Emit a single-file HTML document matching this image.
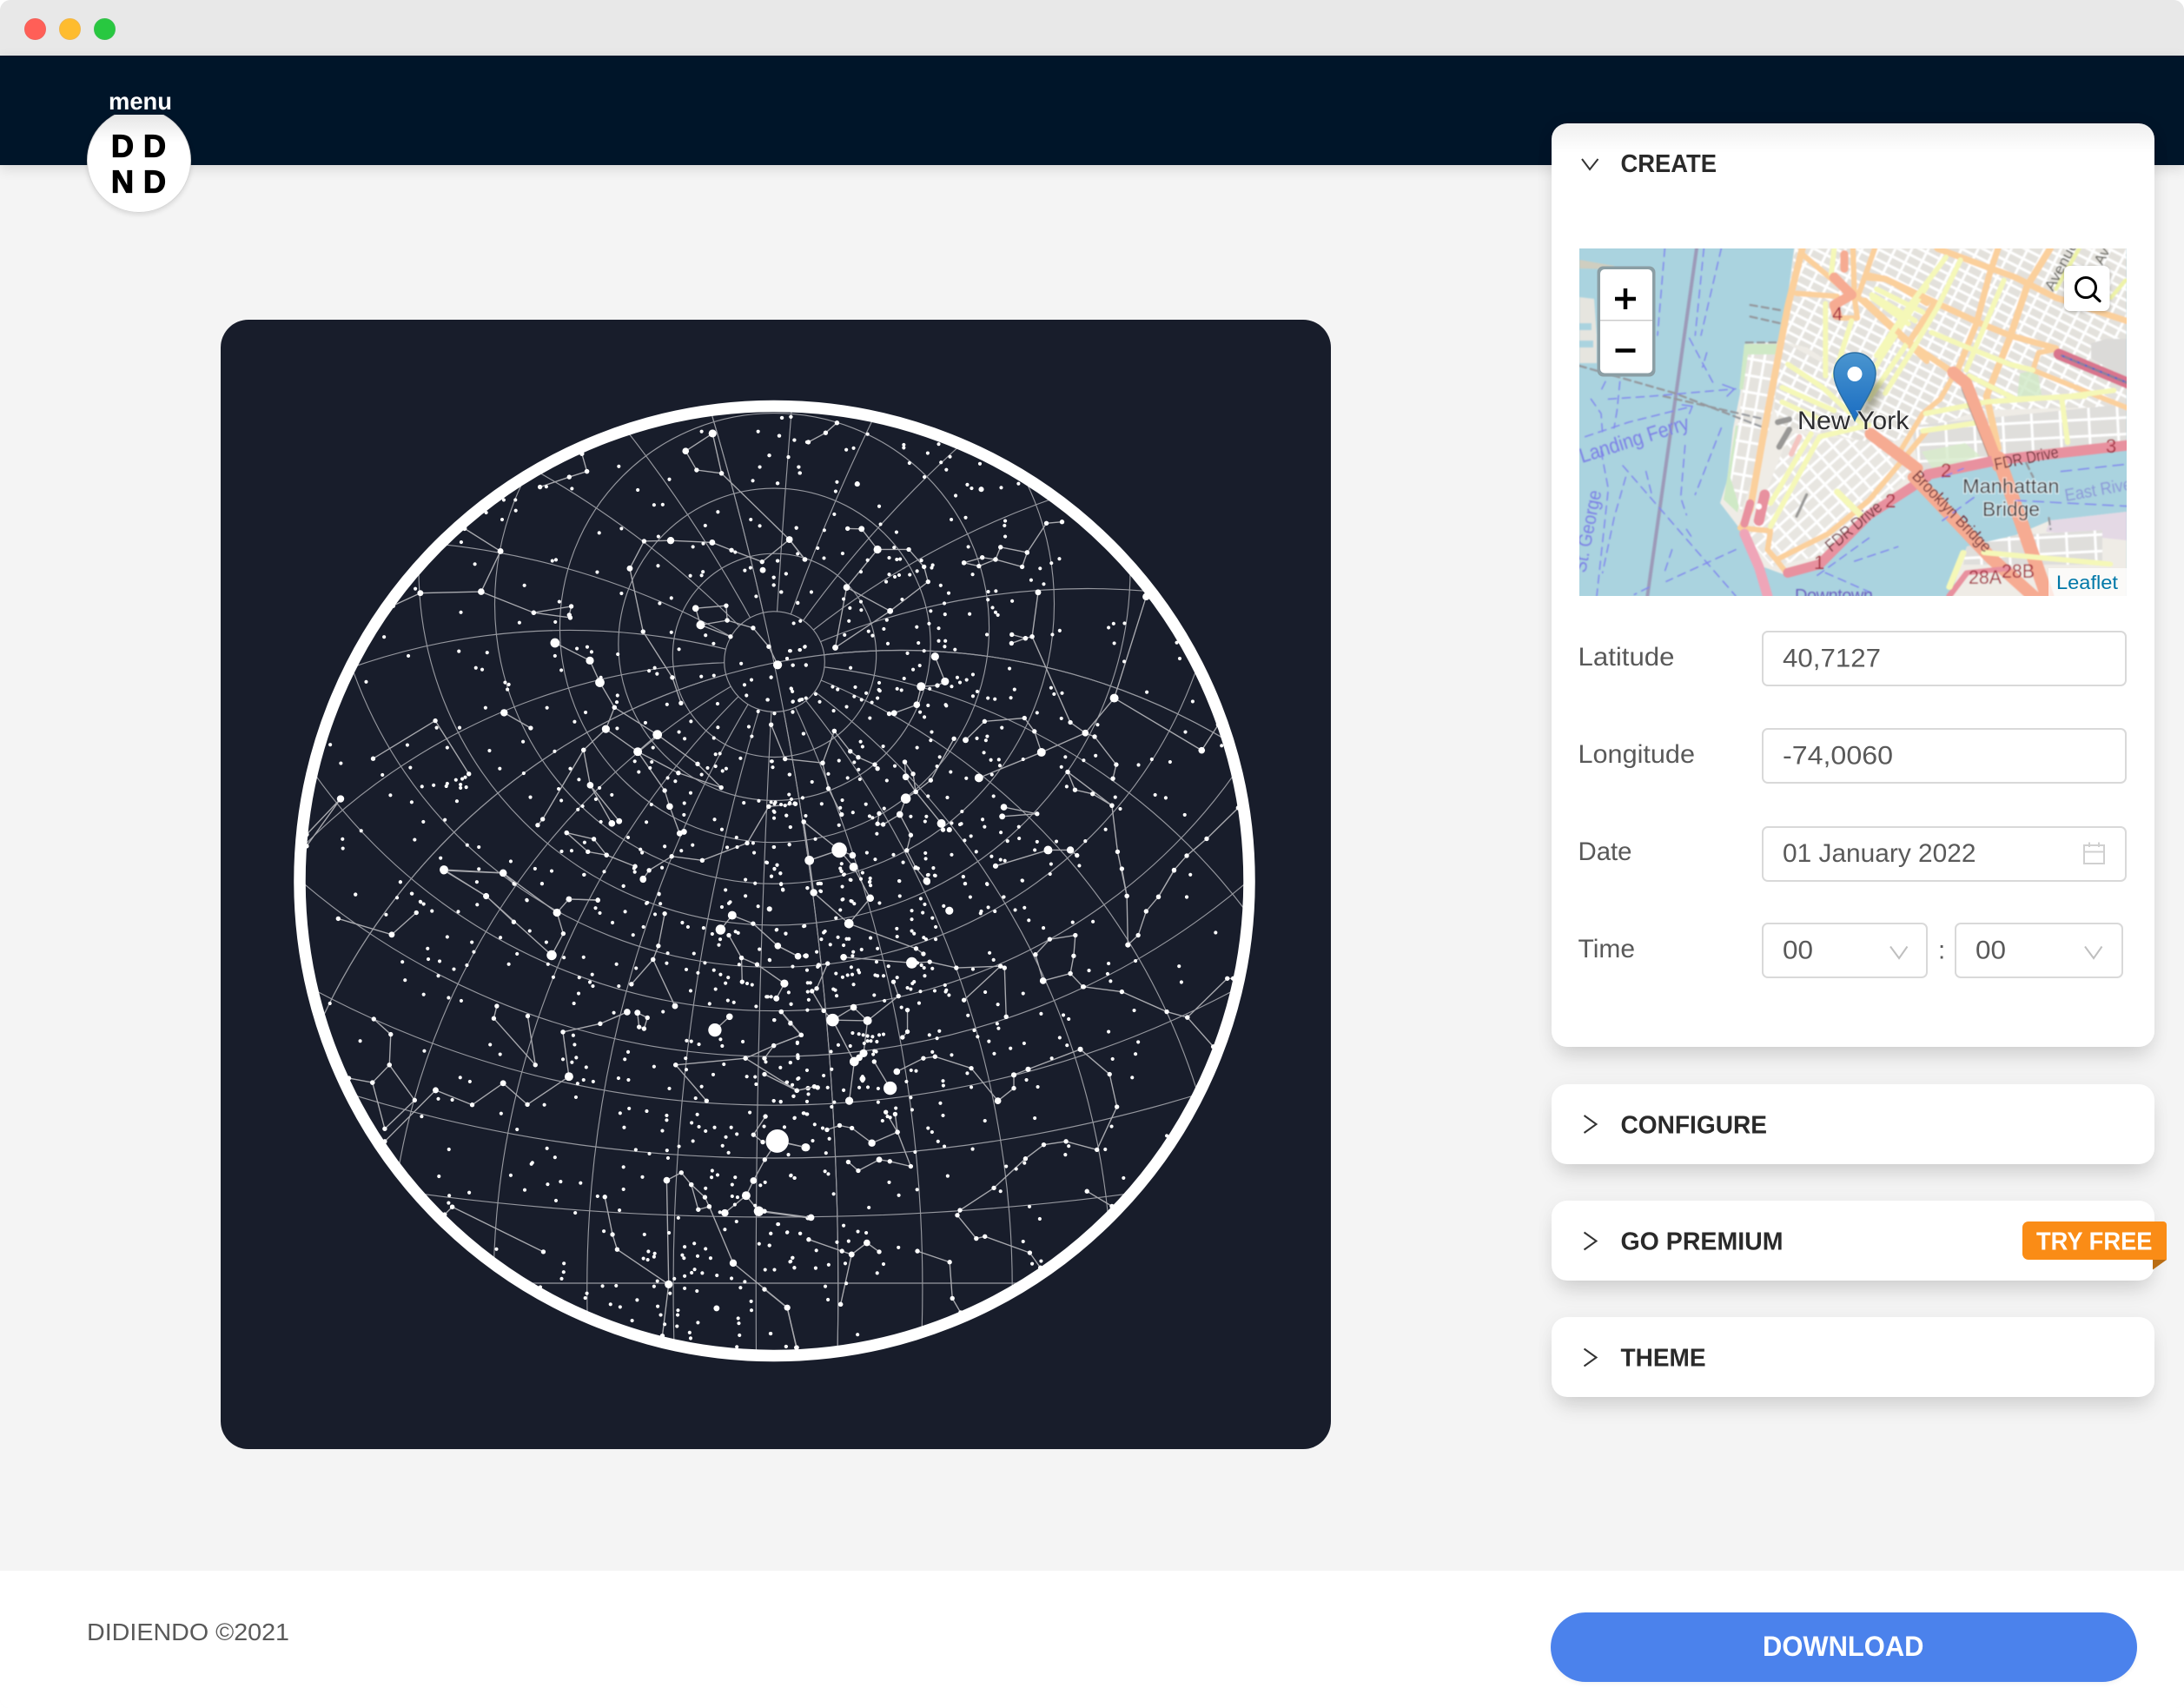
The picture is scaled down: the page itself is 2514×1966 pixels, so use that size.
<!DOCTYPE html>
<html lang="en"><head><meta charset="utf-8"><title>Star map</title>
<style>
*{box-sizing:border-box}
html,body{margin:0;padding:0;background:#fff;overflow:hidden;width:2514px;height:1966px}
body{position:relative;font-family:"Liberation Sans",sans-serif}
.a{position:absolute}
.card{position:absolute;left:1786px;width:694px;background:#fff;border-radius:18px;box-shadow:0 16px 24px -6px rgba(0,0,0,.13),0 2px 22px rgba(0,0,0,.05)}
.inp{position:absolute;background:#fff;border:2.5px solid #d9d9d9;border-radius:7px}
svg text{font-family:"Liberation Sans",sans-serif}
.r path{fill:none;stroke-linecap:round;stroke-linejoin:round}
</style></head><body>
<div class="a" style="left:0;top:0;width:2514px;height:1966px;background:#f4f4f4;border-radius:12px 12px 10px 10px;overflow:hidden">
 <div class="a" style="left:0;top:0;width:2514px;height:64px;background:#e8e8e8"></div>
 <div class="a" style="left:27.500px;top:21px;width:25px;height:25px;border-radius:50%;background:#ff5f57;border:1px solid #f0635c"></div>
 <div class="a" style="left:67.500px;top:21px;width:25px;height:25px;border-radius:50%;background:#febc2e;border:1px solid #f0b64a"></div>
 <div class="a" style="left:107.500px;top:21px;width:25px;height:25px;border-radius:50%;background:#28c840;border:1px solid #3abf50"></div>
 <div class="a" style="left:0;top:64px;width:2514px;height:126px;background:#001529;box-shadow:0 4px 14px rgba(0,0,0,.12)"></div>
 <div class="a" style="left:80px;top:132px;width:160px;height:130px;overflow:hidden"><div class="a" style="left:20px;top:-7px;width:119.500px;height:119.500px;border-radius:50%;border:1.500px solid #d6d6d6;background:linear-gradient(#e6e6e6 6%,#fff 32%);box-shadow:0 2px 6px rgba(0,0,0,.12)"></div></div>
 <div class="a" style="left:254px;top:368px;width:1278px;height:1300px;background:#181d2b;border-radius:32px"></div>
 <div class="card" style="top:142px;height:1063px;background:linear-gradient(#efefef 0,#fff 34px)"></div>
 <div class="card" style="top:1248px;height:92px"></div>
 <div class="card" style="top:1382px;height:92px"></div>
 <div class="card" style="top:1516px;height:92px"></div>
 <div class="inp" style="left:2028px;top:726px;width:420px;height:64px"></div>
 <div class="inp" style="left:2028px;top:838px;width:420px;height:64px"></div>
 <div class="inp" style="left:2028px;top:950.500px;width:420px;height:64px"></div>
 <div class="inp" style="left:2028px;top:1062px;width:191px;height:64px"></div>
 <div class="inp" style="left:2250px;top:1062px;width:193.500px;height:64px"></div>
 <div class="a" style="left:2328px;top:1406px;width:166px;height:44px;background:#fa8c16;border-radius:7px 4px 0 7px"></div>
 <div class="a" style="left:0;top:1807.500px;width:2514px;height:158.500px;background:#fff"></div>
 <div class="a" style="left:1785px;top:1856px;width:675px;height:80px;background:#4b82ec;border-radius:40px;box-shadow:0 3px 4px rgba(0,0,0,.04)"></div>
</div>
<svg class="a" style="left:0;top:0;overflow:hidden" width="2514" height="1966" viewBox="0 0 2514 1966" xmlns="http://www.w3.org/2000/svg">
<defs>
<clipPath id="sky"><circle cx="891.5" cy="1014" r="541"/></clipPath>
<clipPath id="mc"><rect x="1818" y="286" width="630" height="400"/></clipPath>
<marker id="v" viewBox="-9 -9 18 18" markerWidth="18" markerHeight="18" markerUnits="userSpaceOnUse"><circle r="7" fill="#fff"/></marker>
<marker id="s" viewBox="-7 -7 14 14" markerWidth="14" markerHeight="14" markerUnits="userSpaceOnUse"><circle r="5.4" fill="#fff"/></marker>
<pattern id="g1" width="17" height="11" patternUnits="userSpaceOnUse" patternTransform="rotate(27)"><rect width="17" height="11" fill="#fff"/><rect x="1.500" y="1.500" width="14" height="8" fill="#e3e1dc"/></pattern>
<pattern id="g2" width="18" height="13" patternUnits="userSpaceOnUse" patternTransform="rotate(-42)"><rect width="18" height="13" fill="#fff"/><rect x="1.500" y="1.500" width="15" height="10" fill="#e8e6e1"/></pattern>
<pattern id="g3" width="14" height="19" patternUnits="userSpaceOnUse" patternTransform="rotate(10)"><rect width="14" height="19" fill="#fff"/><rect x="1.500" y="1.500" width="11" height="16" fill="#e5e3de"/></pattern>
<pattern id="g4" width="33" height="19" patternUnits="userSpaceOnUse" patternTransform="rotate(-3)"><rect width="33" height="19" fill="#fff"/><rect x="1.500" y="1.500" width="30" height="16" fill="#dfdedb"/></pattern>
<filter id="mb" x="-2%" y="-2%" width="104%" height="104%"><feGaussianBlur stdDeviation=".7"/></filter>
<filter id="mb2" x="-30%" y="-30%" width="160%" height="160%"><feGaussianBlur stdDeviation="4"/></filter>
<linearGradient id="pin" x1="0" y1="0" x2="0" y2="1"><stop offset="0" stop-color="#4a95cf"/><stop offset="1" stop-color="#1a6dc2"/></linearGradient>
</defs>

<!-- header -->
<text x="125" y="126" font-size="28" font-weight="700" fill="#fff" textLength="73" lengthAdjust="spacingAndGlyphs">menu</text>
<g font-size="36" font-weight="700" fill="#000" stroke="#000" stroke-width="1.200">
<text x="128" y="180.500">D</text><text x="165" y="180.500">D</text>
<text x="128" y="221.500">N</text><text x="165" y="221.500">D</text>
</g>

<!-- star map -->
<g clip-path="url(#sky)">
<g fill="none" stroke="#96989f" stroke-width="1.15">
<path d="M891 763A3545 3545 0 0 1 891 2202M891 763A1600 1600 0 0 1 891 2202M891 763A1081 1081 0 0 1 891 2202M891 763A860.5 860.5 0 0 1 891 2202M891 763A757 757 0 0 1 891 2202M891 763A720.2 720.2 0 0 1 891 2202M891 763A734 734 0 1 1 891 2202M891 763A805 805 0 1 1 891 2202M891 763A963 963 0 1 1 891 2202M891 763A1310 1310 0 1 1 891 2202M891 763A2290 2290 0 1 1 891 2202M891 763A12491 12491 0 1 1 891 2202"/>
<path d="M891 763A12491 12491 0 0 0 891 2202M891 763A2290 2290 0 0 0 891 2202M891 763A1310 1310 0 0 0 891 2202M891 763A963 963 0 0 0 891 2202M891 763A805 805 0 0 0 891 2202M891 763A734 734 0 0 0 891 2202M891 763A720.2 720.2 0 1 0 891 2202M891 763A757 757 0 1 0 891 2202M891 763A860.5 860.5 0 1 0 891 2202M891 763A1081 1081 0 1 0 891 2202M891 763A1600 1600 0 1 0 891 2202M891 763A3545 3545 0 1 0 891 2202"/>
</g>
<circle cx="891.5" cy="761.6" r="57.8" fill="#181d2b"/>
<g fill="none" stroke="#96989f" stroke-width="1.15">
<path d="M891 763A3545 3545 0 0 1 891 2202M891 763A734 734 0 1 1 891 2202M891 763A734 734 0 0 0 891 2202M891 763A3545 3545 0 1 0 891 2202"/>
<circle cx="891.5" cy="761.6" r="57.8"/><circle cx="891.5" cy="754.35" r="117.15"/><circle cx="891.5" cy="741.75" r="179.65"/><circle cx="891.5" cy="722.65" r="247.05"/><circle cx="891.5" cy="695.25" r="322"/><circle cx="891.5" cy="655.5" r="409.5"/><circle cx="891.5" cy="598" r="515.4"/><circle cx="891.5" cy="513.3" r="650.3"/><circle cx="891.5" cy="379.2" r="836.9"/><circle cx="891.5" cy="149.3" r="1122.9"/><circle cx="891.5" cy="-321.2" r="1654.2"/><circle cx="891.5" cy="-1702" r="3103"/><path d="M300 1477H1500"/>
</g>

<g transform="translate(330 440) scale(.3827)">
<path fill="none" stroke="#a8a9ae" stroke-width="3.6" marker-start="url(#v)" marker-mid="url(#v)" marker-end="url(#v)" d="M1281 154L1200 207 1233 264 1308 274 1281 154M1308 274L1512 473 1430 540 1338 505 1280 482 1155 476 1075 478 1032 560 1072 750 1160 888 1186 965M1512 473L1558 533M903 268L850 285 762 315M903 268L888 215M643 508L585 630 402 634 320 672M643 508L535 440M585 630L743 693 856 674 850 700 853 708 743 693M1230 680L1322 672 1325 716 1245 730 1230 680M1245 730L1335 765M1325 716L1403 739 1450 795 1477 850M807 784L912 837 942 903 986 978 960 1043 1056 1111 1115 1060 986 978M960 1043L893 1106 770 1314 755 1332M893 1106L913 1212 978 1327M913 1212L1000 1320M1056 1111L1137 1228 1152 1276 1182 1357 1195 1352M1115 1060L1236 1148 1307 1219 1178 1175 1056 1111M654 994L734 1040M260 1132L447 1018 548 1178M162 1253L60 1395M162 1253L60 1360M842 1355L924 1374 962 1422 906 1412 842 1355M962 1422L1048 1456M1072 1494L1090 1468 1158 1426 1250 1438 1385 1386 1450 1276 1530 1268M473 1466L651 1476M473 1466L600 1546M849 1555L936 1557M651 1476L685 1508"/>
<polyline fill="none" stroke="none" marker-start="url(#s)" marker-mid="url(#s)" marker-end="url(#s)" points="1490,107 1517,104 1248,148 1418,148 1482,161 1527,174 1565,180 999,253 1151,292 1056,324 858,320 781,314 1452,220 1509,225 1540,255 1543,273 1423,255 1402,296 1477,304 653,354 688,354 689,386 600,392 648,413 525,481 566,547 799,537 810,534 715,611 934,571 1105,369 1131,368 940,453 1007,440 1118,464 1297,390 1396,413 1423,432 1259,431 1533,438 1253,485 1222,495 1117,552 1349,511 1537,516 1477,537 1432,565 1378,566 1395,558 1502,576 1465,587 1465,610 1488,631 1412,644 1252,570 1248,581 1214,582 1007,635 1157,649 1122,665 1537,663 524,692 700,723 808,721 820,660 387,621 293,766 1157,752 1260,761 1284,786 1180,803 1525,725 1545,718 1558,796 1543,805 1513,808 1505,831 1523,851 1367,846 1562,850 518,809 603,813 366,823 873,801 904,796 917,811 807,823 826,866 1107,859 1090,868 1114,877 996,818 1247,885 1285,882 1398,895 1377,910 1457,888 1518,922 1523,960 1545,955 1562,950 1446,955 1383,942 569,859 588,864 239,901 657,903 668,909 664,924 945,888 995,942 993,962 1144,969 1296,967 1522,992 1467,996 1418,990 598,979 783,979 899,993 866,1021 1079,1024 994,1041 1216,1020 1297,1038 1390,1036 1457,1031 451,1039 520,1039 131,1090 363,1091 483,1099 711,1081 610,1108 806,1110 1180,1052 1197,1072 1102,1099 1285,1070 1399,1065 1555,1057 1500,1133 1290,1119 1303,1117 1365,1131 1458,1140 1462,1158 1513,1180 1098,1142 1047,1140 1059,1172 1093,1160 1248,1180 1266,1160 1290,1155 1311,1169 1322,1162 1169,1200 1146,1190 163,1146 372,1159 641,1162 713,1176 853,1162 288,1181 509,1196 528,1193 537,1188 483,1207 480,1215 442,1212 407,1216 523,1210 523,1220 540,1218 879,1195 818,1223 941,1220 1215,1235 733,1248 312,1242 376,1263 512,1260 978,1241 930,1254 826,1258 890,1275 876,1285 1097,1270 1196,1266 1375,1265 1420,1259 1457,1263 1470,1263 1511,1240 1518,1254 1512,1268 1528,1266 1552,1250 1487,1270 1465,1290 1503,1303 1466,1311 1515,1338 1555,1323 1195,1301 1287,1315 1309,1345 411,1322 476,1316 224,1349 945,1322 1082,1323 168,1374 169,1402 385,1376 1027,1369 1137,1396 1187,1409 1221,1392 1353,1369 1325,1399 1355,1398 1403,1386 1406,1415 1465,1398 1512,1390 827,1411 857,1409 896,1384 1064,1405 1069,1415 543,1392 578,1398 463,1431 674,1441 747,1463 797,1470 578,1464 955,1472 895,1481 1045,1462 1047,1473 1129,1460 1443,1444 1475,1452 1467,1463 1458,1486 1485,1477 1380,1496 1409,1507 1487,1510 1493,1527 572,1503 768,1508 1013,1515 342,1503 207,1541 376,1538 722,1557 1320,1527 1380,1545 1120,1540 1085,1565 402,1562"/>
<g fill="#fff"><circle cx="1281" cy="154" r="12"/><circle cx="1200" cy="207" r="10"/><circle cx="1155" cy="476" r="11"/><circle cx="1032" cy="560" r="9"/><circle cx="1245" cy="730" r="13"/><circle cx="1230" cy="680" r="10"/><circle cx="1477" cy="850" r="13"/><circle cx="1512" cy="473" r="10"/><circle cx="1432" cy="565" r="9"/><circle cx="807" cy="784" r="14"/><circle cx="912" cy="837" r="12"/><circle cx="942" cy="903" r="14"/><circle cx="960" cy="1043" r="12"/><circle cx="1115" cy="1060" r="14"/><circle cx="1056" cy="1111" r="13"/><circle cx="654" cy="994" r="11"/><circle cx="585" cy="630" r="10"/><circle cx="643" cy="508" r="9"/><circle cx="402" cy="634" r="9"/><circle cx="162" cy="1253" r="11"/><circle cx="913" cy="1212" r="10"/><circle cx="978" cy="1327" r="10"/><circle cx="1000" cy="1320" r="9"/><circle cx="1182" cy="1357" r="9"/><circle cx="1195" cy="1352" r="9"/><circle cx="1152" cy="1276" r="10"/><circle cx="473" cy="1466" r="13"/><circle cx="651" cy="1476" r="11"/><circle cx="600" cy="1546" r="9"/><circle cx="849" cy="1555" r="9"/><circle cx="1072" cy="1494" r="10"/><circle cx="1280" cy="482" r="9"/></g>
</g>

<g transform="translate(880 440) scale(.3827)">
<path fill="none" stroke="#a8a9ae" stroke-width="3.6" marker-start="url(#v)" marker-mid="url(#v)" marker-end="url(#v)" d="M132 180L184 152 218 122M75 473L122 533M250 440L292 441 340 503 434 503 480 555 492 600 378 688 213 798M340 503L247 617 213 798M247 617L378 688M600 543L655 527 695 533 710 496 790 512 775 555 695 533 645 553 600 543M790 512L848 424 895 420M823 632L805 765 785 770 744 759M785 770L743 785M805 765L920 1023 965 1055 1052 950 1148 645M965 1055L833 1113 645 1190M965 1055L993 1066 1058 1150 1048 1192M1052 950L1315 1107 1365 1030M513 825L543 900 520 912 471 915 458 970 390 995 375 997M605 1076L662 1020 782 1010 812 1050 833 1113M912 1172L934 1226 987 1238 1045 1273 1062 1412 1090 1545M912 1172L1045 1273M720 1278L820 1298 715 1306M853 1407L920 1407 940 1423M853 1407L695 1455M1185 1548L1232 1467 1270 1424 1330 1373 1425 1280M422 1142L447 1178 455 1232 532 1327M422 1142L425 1187 455 1232 425 1252 407 1300 440 1362 428 1408 455 1460 488 1500M455 1232L500 1197 570 1072M407 1300L357 1330 340 1328 345 1297M210 1049L258 1110 282 1128 332 1150 340 1162M210 1049L175 1145 62 1133 20 1030M175 1145L192 1222 232 1300M118 1322L135 1438 148 1535M118 1322L225 1407 135 1438M225 1407L265 1423M268 1458L318 1552M225 1407L268 1458"/>
<polyline fill="none" stroke="none" marker-start="url(#s)" marker-mid="url(#s)" marker-end="url(#s)" points="52,107 79,104 44,161 90,174 14,220 72,225 103,255 107,273 246,203 268,198 218,300 39,304 214,328 310,156 419,188 419,197 491,213 524,186 558,224 531,241 547,263 436,243 481,285 345,373 210,397 349,427 96,438 397,451 648,245 610,308 623,319 712,317 764,305 575,341 562,413 605,407 724,417 722,431 724,464 613,495 180,445 160,499 235,515 39,537 179,529 310,535 375,528 398,533 408,532 390,497 65,576 28,587 28,610 50,631 100,664 141,631 290,570 375,578 392,585 405,580 437,579 459,568 472,536 506,550 503,558 366,600 530,611 554,634 626,578 802,595 829,560 863,544 887,531 840,607 673,630 696,628 672,654 745,658 414,653 541,665 686,678 695,692 702,700 617,697 543,698 500,688 290,660 238,652 257,679 291,685 241,760 254,718 368,715 458,736 495,726 524,740 359,742 313,749 325,762 669,759 888,747 866,759 1035,738 1050,726 1083,725 371,786 463,784 524,778 544,778 542,795 573,804 480,808 1052,785 1082,840 1240,783 1249,831 13,796 107,805 122,795 78,808 68,831 85,851 125,851 430,815 259,859 447,864 467,852 737,861 420,891 627,879 580,888 588,903 608,895 563,915 20,887 345,904 205,916 220,924 273,917 270,945 292,955 306,935 344,925 347,928 340,950 399,922 412,926 497,922 752,924 640,930 627,944 672,950 693,953 741,949 862,919 871,938 895,935 1150,932 1288,960 10,955 85,961 105,957 113,954 80,921 84,930 154,938 166,961 247,976 323,963 492,972 468,992 545,970 547,973 208,988 85,991 30,996 317,1010 481,1007 820,994 893,1011 1002,1030 117,1057 503,1052 714,1039 670,1065 666,1077 639,1071 1266,1052 1375,1093 1125,1151 500,1077 289,1081 295,1096 357,1095 459,1099 1165,1134 1220,1142 905,1127 893,1157 960,1137 996,1123 660,1114 681,1136 705,1135 708,1153 778,1134 527,1127 519,1155 23,1140 224,1138 392,1154 283,1165 270,1143 560,1172 684,1180 607,1191 75,1180 192,1178 368,1198 287,1194 250,1190 143,1202 909,1216 1175,1241 1207,1250 1055,1248 1070,1283 689,1245 550,1249 234,1257 492,1245 1264,1301 172,1268 305,1269 13,1277 30,1268 62,1273 92,1267 76,1265 228,1280 30,1293 66,1303 124,1304 232,1300 266,1294 325,1310 316,1305 360,1282 594,1291 440,1306 487,1306 483,1321 656,1315 662,1337 592,1328 588,1330 563,1326 224,1332 78,1338 338,1358 765,1337 711,1354 1026,1345 153,1374 29,1398 75,1391 621,1365 602,1378 637,1412 766,1372 731,1380 820,1382 878,1381 813,1407 965,1380 308,1415 388,1421 563,1421 484,1416 485,1433 333,1435 417,1444 683,1426 710,1436 723,1439 862,1449 947,1454 1281,1481 859,1479 776,1499 598,1487 604,1508 670,1510 405,1500 508,1461 491,1482 514,1484 462,1462 38,1452 30,1464 48,1477 21,1486 8,1445 232,1448 228,1462 231,1470 240,1480 260,1497 290,1494 318,1492 317,1502 161,1508 170,1508 234,1517 50,1510 55,1527 129,1521 168,1530 236,1555 260,1560 1270,1548 720,1548"/>
<g fill="#fff"><circle cx="39" cy="850" r="13"/><circle cx="340" cy="503" r="12"/><circle cx="292" cy="441" r="9"/><circle cx="75" cy="473" r="10"/><circle cx="279" cy="306" r="8"/><circle cx="652" cy="322" r="8"/><circle cx="247" cy="617" r="10"/><circle cx="213" cy="798" r="9"/><circle cx="378" cy="688" r="9"/><circle cx="513" cy="825" r="12"/><circle cx="543" cy="900" r="12"/><circle cx="471" cy="915" r="13"/><circle cx="458" cy="970" r="10"/><circle cx="390" cy="995" r="9"/><circle cx="1052" cy="950" r="13"/><circle cx="1148" cy="645" r="11"/><circle cx="965" cy="1055" r="10"/><circle cx="833" cy="1113" r="13"/><circle cx="645" cy="1190" r="13"/><circle cx="1315" cy="1107" r="10"/><circle cx="823" cy="632" r="9"/><circle cx="605" cy="1076" r="9"/><circle cx="425" cy="1252" r="15"/><circle cx="407" cy="1300" r="10"/><circle cx="532" cy="1327" r="13"/><circle cx="556" cy="1346" r="8"/><circle cx="537" cy="1346" r="7"/><circle cx="425" cy="1187" r="10"/><circle cx="225" cy="1407" r="23"/><circle cx="135" cy="1438" r="14"/><circle cx="265" cy="1423" r="10"/><circle cx="268" cy="1458" r="13"/><circle cx="148" cy="1535" r="11"/><circle cx="318" cy="1552" r="11"/><circle cx="488" cy="1500" r="11"/><circle cx="853" cy="1407" r="13"/><circle cx="920" cy="1407" r="11"/><circle cx="720" cy="1278" r="10"/><circle cx="715" cy="1306" r="9"/><circle cx="695" cy="1455" r="8"/></g>
</g>

<g transform="translate(330 1000) scale(.3827)">
<path fill="none" stroke="#a8a9ae" stroke-width="3.6" marker-start="url(#v)" marker-mid="url(#v)" marker-end="url(#v)" d="M473 5L651 13M473 5L600 82 797 260 832 195 813 132 849 91 936 95M651 13L813 132M600 82L683 160M155 150L316 198 390 132M1137 135L1118 232 1102 273 1037 347M1102 273L1168 413M831 491L943 466 1024 431M831 491L849 625 724 709 651 645 558 710 448 666 295 820M1055 433L1085 448 1075 481 1060 476 1055 433M632 413L623 450 748 590 725 443M262 452L313 498 309 590 258 643 295 782 385 696 309 590M187 630L258 643M498 1017L772 1152M498 1017L475 1040M1143 937L1187 914 1217 950 1238 1025 1271 1016 1258 988 1217 950M1271 1016L1343 1186 1506 1320 1533 1440M1143 937L1149 1250 1130 1405M957 987L980 1100 994 1145 1149 1250M1288 485L1332 445M1440 745L1404 800 1432 822M1476 818L1560 838M1476 818L1438 875 1404 938 1382 983 1318 1035M1382 983L1420 1030 1568 1050M1170 590L1380 570 1465 532 1548 500 1488 430M1380 570L1535 667 1568 660M1170 590L1263 698M1340 140L1305 183M1340 140L1403 165 1477 232 1538 263M1330 200L1368 268 1370 340M1368 268L1415 288 1497 345 1473 390"/>
<polyline fill="none" stroke="none" marker-start="url(#s)" marker-mid="url(#s)" marker-end="url(#s)" points="342,40 207,77 332,87 377,75 403,100 412,106 299,138 437,127 516,129 573,108 768,45 894,18 723,95 1013,52 1120,75 1082,104 1124,105 1108,137 1190,162 1207,175 1254,178 1330,104 1334,100 1309,115 1418,113 1452,120 1473,184 1501,195 1558,172 731,187 643,207 781,221 929,118 942,133 1018,129 980,162 1073,175 1042,199 1350,189 1358,193 1280,196 1304,212 1300,229 1422,242 483,205 557,221 424,240 563,250 693,256 893,266 834,267 426,272 460,278 348,280 503,302 668,287 542,290 786,287 992,287 1143,284 1225,255 1146,254 1258,283 1051,299 1202,303 1237,313 1285,305 1305,318 1328,327 1320,344 1361,288 1453,275 1522,294 1558,262 456,322 356,335 802,326 880,327 919,318 912,341 921,353 999,353 1215,367 1290,362 1385,345 1400,349 1510,372 412,378 487,388 525,397 878,375 864,405 1443,385 1327,396 1345,402 1272,406 1412,414 1517,407 130,405 1132,430 984,433 1466,455 1516,462 862,501 866,529 221,518 1203,517 1217,519 1240,528 1305,513 1310,533 1372,520 612,529 642,558 414,548 1027,551 1017,573 871,568 858,582 831,573 901,597 1200,570 1536,525 1538,565 1538,570 1441,581 1485,598 1515,583 1315,588 1105,595 1202,604 1384,625 1409,626 1283,619 1412,648 1504,642 1521,650 1540,630 522,628 551,640 998,630 1028,635 893,635 922,640 875,646 1151,661 1248,655 456,692 498,695 870,687 1230,690 1465,698 1486,700 1525,684 775,710 1003,735 1030,721 1083,729 1143,742 1143,756 1235,739 1393,733 1528,749 1556,735 1566,738 406,745 645,736 1218,764 1240,776 1260,789 1287,778 1337,778 1354,798 1015,778 693,784 1130,788 1222,819 1321,807 1311,833 1436,775 1180,835 1144,847 1050,845 1091,857 1147,870 1329,854 488,844 783,841 807,868 739,884 736,888 1013,897 458,925 1070,927 1280,908 1296,921 1278,928 1349,928 1340,950 1439,943 1425,952 1516,923 1528,930 674,922 785,949 824,941 884,945 716,966 1013,964 1260,961 549,974 1340,985 1356,988 489,983 487,1005 810,998 935,985 1001,1027 868,1035 1303,1033 1348,1010 1409,1013 1178,1050 1353,1061 954,1090 1150,1095 1076,1100 1318,1085 1456,1097 1506,1093 1545,1097 1479,1069 1421,1128 1452,1133 1197,1137 1226,1127 1260,1143 1088,1151 1107,1157 1105,1167 1073,1172 1086,1176 1190,1162 1195,1171 1236,1165 1275,1171 1522,1170 1516,1181 631,1144 834,1187 833,1213 1227,1205 1218,1215 1250,1216 1439,1206 1527,1200 827,1233 1197,1225 1294,1223 1338,1232 1378,1242 1115,1240 1166,1233 1105,1256 950,1255 991,1254 763,1258 1153,1277 1197,1262 1234,1270 1365,1260 903,1277 898,1291 1054,1297 974,1310 1003,1318 1116,1316 1177,1328 1293,1322 1397,1301 1398,1328 1125,1342 1176,1342 1358,1352 1360,1367 1039,1359 1237,1365 1174,1376 1137,1370 1212,1395 1215,1412 1362,1403 1456,1398 1354,1438 1502,1437"/>
<g fill="#fff"><circle cx="1476" cy="818" r="34"/><circle cx="1288" cy="485" r="20"/><circle cx="797" cy="260" r="15"/><circle cx="1305" cy="183" r="15"/><circle cx="1340" cy="140" r="13"/><circle cx="813" cy="132" r="12"/><circle cx="1497" cy="345" r="12"/><circle cx="849" cy="625" r="13"/><circle cx="1538" cy="263" r="10"/><circle cx="1473" cy="390" r="9"/><circle cx="1477" cy="232" r="9"/><circle cx="1560" cy="838" r="12"/><circle cx="1420" cy="1030" r="15"/><circle cx="1382" cy="983" r="13"/><circle cx="1318" cy="1035" r="11"/><circle cx="1404" cy="938" r="10"/><circle cx="1343" cy="1186" r="11"/><circle cx="1149" cy="1250" r="12"/><circle cx="1143" cy="937" r="10"/><circle cx="1024" cy="431" r="10"/><circle cx="1055" cy="433" r="9"/><circle cx="1168" cy="413" r="9"/><circle cx="1332" cy="445" r="10"/><circle cx="1506" cy="1320" r="9"/><circle cx="1293" cy="1322" r="9"/><circle cx="316" cy="198" r="9"/><circle cx="448" cy="666" r="9"/><circle cx="651" cy="645" r="9"/><circle cx="600" cy="82" r="9"/><circle cx="473" cy="5" r="12"/><circle cx="651" cy="13" r="11"/><circle cx="1072" cy="32" r="10"/></g>
</g>

<g transform="translate(880 1000) scale(.3827)">
<path fill="none" stroke="#a8a9ae" stroke-width="3.6" marker-start="url(#v)" marker-mid="url(#v)" marker-end="url(#v)" d="M318 88L254 165 148 72M254 165L456 240 478 256M40 232L100 263M238 266L443 283 497 280 577 298 710 293 722 298 727 445M710 293L600 395M163 290L190 285 157 360 143 368 178 427 205 455 268 417 310 457 205 455M205 455L270 580 255 698M310 457L403 383 388 340M310 457L298 555 270 580M330 580L378 660M430 425L430 490 415 507M398 610L478 570 513 565 622 600 702 698 750 660 750 620 793 603 950 543 1038 618 1060 716 1000 845 907 820 840 830 785 872 690 960 588 1027 580 1042 637 1112 663 1106 798 1155 830 1200M960 355L1075 370 1210 430 1272 447 1350 535M1272 447L1392 330 1410 330M838 337L920 315 930 262 935 200 858 212 815 258 838 337M920 315L958 355M1093 229L1090 82 1075 0M1093 229L1124 200 1148 128 1185 84 1232 5M970 970L1045 1015M460 1150L557 1183 565 1292 590 1335M133 1115L233 1150 262 1160 308 1125 345 1152M262 1160L229 1310M188 785L226 772 263 780 323 825 400 792 440 895 377 880 345 875 282 908 252 882M400 792L393 738M400 792L365 732M38 820L125 838M0 1030L140 1049M68 1320L97 1440M0 1265L68 1320M0 570L28 532 110 500 78 465 50 430M0 618L97 667 150 655 160 658"/>
<polyline fill="none" stroke="none" marker-start="url(#s)" marker-mid="url(#s)" marker-end="url(#s)" points="50,45 55,62 166,44 170,68 129,58 234,93 263,98 270,105 258,33 232,8 238,18 268,0 295,12 316,40 319,50 346,103 406,37 407,82 493,18 512,20 598,24 603,45 669,45 619,85 470,90 482,107 505,148 476,132 443,126 443,152 515,175 399,204 443,187 450,195 479,207 486,212 515,212 539,112 652,128 650,134 673,116 693,128 754,124 782,117 795,155 719,85 775,35 839,178 927,161 988,159 1270,85 1357,192 228,124 215,148 118,173 37,183 64,195 182,188 178,192 398,180 171,212 221,206 247,211 254,211 319,208 198,228 238,230 340,240 292,243 267,250 265,262 157,250 677,253 689,274 15,274 128,305 160,295 337,280 373,293 460,283 472,290 480,298 505,300 627,302 261,296 282,305 285,312 215,315 250,320 235,326 264,318 268,348 333,320 340,322 358,322 399,327 482,322 976,306 1035,285 1032,316 1041,338 1247,293 1254,341 130,343 138,343 450,340 445,345 207,362 213,365 217,382 133,394 130,370 330,380 430,358 440,362 469,369 512,367 543,350 547,365 545,370 664,371 555,380 778,375 1116,277 80,407 49,430 129,425 465,404 412,417 361,397 702,408 20,385 10,385 30,455 832,436 612,441 899,440 915,452 1112,426 1210,430 700,466 704,480 631,486 641,505 1035,490 888,508 496,500 526,488 519,510 265,494 284,497 297,500 310,503 325,505 345,500 358,498 338,520 310,518 320,518 222,530 258,533 300,525 675,519 781,525 740,540 910,531 1124,521 99,522 200,550 100,560 100,568 563,560 505,551 691,556 1116,557 1047,572 330,548 336,550 327,558 864,570 78,583 128,606 202,603 441,606 456,608 610,615 788,635 1106,628 178,622 100,632 295,625 295,638 537,638 538,652 427,640 622,657 822,656 238,666 190,658 285,658 311,657 342,661 68,642 132,678 87,684 128,700 28,698 49,701 342,702 440,688 210,702 202,716 529,705 444,725 117,735 127,738 537,742 395,720 370,745 378,748 355,758 90,750 151,769 60,777 175,780 492,780 504,792 663,758 813,750 1044,775 522,820 541,835 145,818 195,812 72,860 185,855 626,843 905,860 915,834 1025,844 453,852 80,922 90,930 182,910 192,918 727,895 757,903 782,885 551,924 1080,930 375,943 459,965 208,978 404,982 710,970 314,1019 797,1016 828,1053 1210,803 40,1069 19,1097 68,1094 107,1097 238,1073 281,1091 306,1095 15,1133 218,1123 253,1120 403,1139 156,1148 243,1187 358,1189 84,1170 77,1182 90,1200 154,1201 193,1191 30,1206 339,1216 832,1180 805,1188 246,1247 183,1256 191,1296 778,1121 18,1398 280,1401 65,1437"/>
<g fill="#fff"><circle cx="38" cy="820" r="34"/><circle cx="205" cy="455" r="19"/><circle cx="443" cy="283" r="17"/><circle cx="378" cy="660" r="20"/><circle cx="254" cy="165" r="14"/><circle cx="310" cy="457" r="13"/><circle cx="270" cy="580" r="14"/><circle cx="298" cy="555" r="12"/><circle cx="285" cy="568" r="10"/><circle cx="255" cy="698" r="12"/><circle cx="398" cy="610" r="10"/><circle cx="125" cy="838" r="12"/><circle cx="556" cy="126" r="12"/><circle cx="489" cy="39" r="10"/><circle cx="318" cy="88" r="11"/><circle cx="148" cy="72" r="10"/><circle cx="40" cy="232" r="10"/><circle cx="100" cy="263" r="9"/><circle cx="125" cy="262" r="8"/><circle cx="238" cy="266" r="10"/><circle cx="15" cy="121" r="8"/><circle cx="268" cy="417" r="10"/><circle cx="838" cy="337" r="10"/><circle cx="702" cy="698" r="10"/><circle cx="1093" cy="229" r="8"/><circle cx="323" cy="825" r="11"/><circle cx="345" cy="875" r="9"/><circle cx="140" cy="1049" r="10"/><circle cx="262" cy="1160" r="9"/><circle cx="308" cy="1125" r="10"/><circle cx="68" cy="1320" r="9"/><circle cx="229" cy="1310" r="7"/><circle cx="295" cy="632" r="9"/><circle cx="950" cy="543" r="8"/><circle cx="750" cy="620" r="8"/><circle cx="793" cy="603" r="8"/></g>
</g>
</g>
<circle cx="891.500" cy="1014" r="546.500" fill="none" stroke="#fff" stroke-width="13.500"/>

<!-- map -->
<g clip-path="url(#mc)">
<rect x="1818" y="286" width="630" height="400" fill="#aad3df"/>
<g filter="url(#mb)">
<polygon points="1818,299 1858,306 1858,310 1818,309" fill="#cfcec0"/>
<polygon points="1818,342 1835,344 1838,386 1838,418 1818,418" fill="#e6e5df"/>
<rect x="1818" y="372" width="14" height="8" fill="#aad3df"/><rect x="1818" y="392" width="16" height="8" fill="#aad3df"/>
<polygon points="2066,280 2051,393 2008,396 2003,453 1995,493 1988,553 1980,579 2003,609 2031,653 2058,663 2095,649 2168,586 2201,553 2259,530 2448,513 2448,280" fill="#efece6"/>
<polygon points="2244,690 2264,629 2320,616 2360,599 2448,589 2448,690" fill="#efece6"/>
<polygon points="2360,599 2448,589 2448,622 2355,612" fill="#e4d9e5"/>
<polygon points="2008,396 2050,396 2038,452 2002,448" fill="#cfe9c6"/>
<polygon points="1998,490 2020,490 2000,590 1984,575" fill="#cfe9c6"/>
<polygon points="2066,286 2448,286 2448,468 2280,472 2200,500 2140,440 2080,400 2052,393" fill="url(#g1)"/>
<polygon points="2060,498 2170,510 2200,545 2095,640 2040,652 2012,620" fill="url(#g2)"/>
<polygon points="2012,408 2052,408 2035,500 2004,590 1992,550" fill="url(#g3)"/>
<polygon points="2052,393 2140,440 2200,500 2170,512 2050,490 2042,470" fill="url(#g1)"/>
<polygon points="2200,490 2448,465 2448,510 2290,530 2210,548" fill="url(#g4)"/>
<polygon points="2264,629 2320,616 2420,610 2420,650 2260,650" fill="url(#g4)"/>
<polygon points="2425,390 2448,390 2448,435 2407,413 2407,395" fill="#dbdad8"/>
<polygon points="2212,520 2262,510 2280,525 2225,540" fill="#d7ebcb" opacity=".8"/>
<polygon points="2325,430 2345,425 2350,455 2322,458" fill="#cfe9c6" opacity=".8"/>
<!-- Crop A space -->
<g class="r" transform="translate(1818 286) scale(.33333)">
<path stroke="#9c9ab8" stroke-width="12" d="M405 0L235 1200"/>
<path stroke="#94979c" stroke-width="7" stroke-dasharray="24 16" d="M0 405L330 500 640 620M290 510L640 590M590 195L705 215M590 235L700 260M575 325H700"/>
<path stroke="#7f86ee" stroke-width="4.500" stroke-dasharray="28 20" d="M295 0L270 300M430 0L400 300M490 0L420 300M380 310L465 470M440 360L425 410M40 520L75 570 80 640M90 460L75 490M100 520L250 510 540 485M20 650L170 600 390 545M140 460L130 560 120 620M230 770L250 850M365 680L350 860 370 920M490 620L400 850M370 970L390 1000M160 790L120 930 80 1120M75 700L100 830 60 1200M320 1040L290 1130M540 1040L300 1150M240 1170L190 1195M150 750L540 1200M950 1080L1100 1030M1000 1000L820 1130M850 1120L1010 1190"/>
<path stroke="#7f86ee" stroke-width="4.500" d="M495 470L535 485 510 510M355 540L390 545 380 570"/>
<path stroke="#fbd09c" stroke-width="24" d="M770 0L720 200 640 620 590 900 560 965"/>
<path stroke="#fbd09c" stroke-width="19" d="M770 20L900 130 960 160M750 155L890 165M945 0L950 170 960 240 900 240M1020 0L985 100 960 170M990 90L1060 105 1200 190M970 175L1200 390M555 965L660 975 650 1040 680 1075 715 1120M680 1075L860 985 1000 870 1200 630"/>
<path stroke="#f5f8b8" stroke-width="18" d="M850 190L850 440M940 250L880 440M1010 160L1160 250M1200 130L1040 380 960 520M1200 250L1130 330 1000 520M720 400L840 480 980 610M700 480L880 560M700 530L830 590M1000 610L830 650 660 960M800 640L660 880M880 0L870 90"/>
<path stroke="#f5f8b8" stroke-width="22" d="M890 840L980 930"/>
<path stroke="#f6ab92" stroke-width="34" d="M880 100L940 160 880 195 890 230"/>
<path stroke="#f6ab92" stroke-width="28" d="M915 20V70"/>
<path stroke="#e8919f" stroke-width="34" d="M720 1120L830 1090 1000 920 1200 790"/>
<path stroke="#e8919f" stroke-width="28" d="M590 880L570 950"/>
<path stroke="#e8919f" stroke-width="36" d="M640 850L620 940"/>
<path stroke="#efa5b8" stroke-width="34" d="M570 985L620 1100 650 1200"/>
<path stroke="#999896" stroke-width="20" d="M685 600L725 590M690 685L725 625"/>
<path stroke="#999896" stroke-width="10" d="M785 850L750 925"/>
<path stroke="#f4c5c0" stroke-width="18" d="M760 650L732 710"/>
</g>
<circle cx="2024.500" cy="583" r="3.500" fill="#fff"/>
<!-- Crop B space -->
<g class="r" transform="translate(2100 286) scale(.33333)">
<path stroke="#fbd09c" stroke-width="22" d="M150 100L210 105 380 185 530 255 640 300 800 345M390 0L660 100 800 170 1044 250M600 0L570 90 525 260 460 420M140 180L300 330 440 425M380 190L295 320"/>
<path stroke="#fbd09c" stroke-width="24" d="M780 0L700 130 640 310 560 510 600 690"/>
<path stroke="#fbd09c" stroke-width="18" d="M720 420L1044 550M790 350L740 360 720 420M440 450L400 520 340 570 250 720"/>
<path stroke="#f5f8b8" stroke-width="18" d="M420 30L300 190 180 370M470 40L390 205 310 340 210 500M180 140L340 220M165 170L290 260M370 290L490 340 640 400 720 420M620 110L540 300 490 420M500 440L660 520 900 510M350 570L560 530 850 510 1000 490M820 520L840 670M340 630L540 600"/>
<path stroke="#eef3a8" stroke-width="14" d="M880 0L800 140M1040 110L990 170"/>
<path stroke="#f6ab92" stroke-width="42" d="M445 428L490 465 600 750"/>
<path stroke="#555" stroke-width="3" opacity=".45" d="M472 480L580 750"/>
<path stroke="#d9758d" stroke-width="38" d="M810 365L1060 470"/>
<path stroke="#8d7f9a" stroke-width="9" d="M820 370L1060 470"/>
<path stroke="#3d55e0" stroke-width="5" stroke-dasharray="2 26" d="M825 372L1050 465"/>
<path stroke="#f6ab92" stroke-width="42" d="M160 640L320 760"/>
</g>
<!-- Lower right, zoom space -->
<g class="r" transform="translate(1818 286) scale(.4018 .3333)">
<path stroke="#e8919f" stroke-width="34" d="M1000 780L1200 730 1568 680" style="stroke-width:36"/>
<path stroke="#f6ab92" stroke-width="40" d="M960 790L1180 1070 1300 1200M1200 720L1340 1200"/>
<path stroke="#e8919f" stroke-width="18" d="M1060 1200L1110 1120 1230 1105"/>
<path stroke="#f5f8b8" stroke-width="18" d="M1160 1050L1520 1090M1100 1050L1060 1170"/>
<path stroke="#7f86ee" stroke-width="4.500" stroke-dasharray="30 20" d="M1380 770L1568 745M1250 870L1568 890M1040 790L1100 760M1130 860L1040 940"/>
<path stroke="#94979c" stroke-width="6" stroke-dasharray="24 14" d="M1280 740L1300 790M1345 930L1350 970"/>
</g>
<g>
<text x="2297" y="541" font-size="19" fill="#6f2a36" transform="rotate(-11.500 2297 541)" textLength="75" lengthAdjust="spacingAndGlyphs">FDR Drive</text>
<text x="2108" y="636" font-size="20" fill="#6f2a36" transform="rotate(-40 2108 636)" textLength="78" lengthAdjust="spacingAndGlyphs">FDR Drive</text>
<text x="2200" y="549" font-size="19" fill="#6f2a36" transform="rotate(46 2200 549)" textLength="122" lengthAdjust="spacingAndGlyphs">Brooklyn Bridge</text>
<text x="1821" y="533" font-size="24" fill="#7b80e6" transform="rotate(-17.500 1821 533)" textLength="131" lengthAdjust="spacingAndGlyphs">Landing Ferry</text>
<text x="1825" y="660" font-size="22" fill="#7b80e6" transform="rotate(-79 1825 660)" textLength="96" lengthAdjust="spacingAndGlyphs">St. George</text>
<text x="2378" y="577" font-size="20" fill="#8c9ad8" transform="rotate(-10 2378 577)" textLength="84" lengthAdjust="spacingAndGlyphs">East River</text>
<text x="2363" y="336" font-size="17" fill="#55554d" transform="rotate(-62 2363 336)" textLength="62" lengthAdjust="spacingAndGlyphs">Avenue</text>
<text x="2420" y="306" font-size="17" fill="#55554d" transform="rotate(-62 2420 306)">Av</text>
<text x="2066" y="692" font-size="20" fill="#6a5fc0" textLength="90">Downtown</text>
<g font-size="22" fill="#a52a3c">
<text x="2109" y="369">4</text>
<text x="2234" y="549">2</text>
<text x="2170" y="584">2</text>
<text x="2088" y="655">1</text>
<text x="2424" y="521">3</text>
<text x="2266" y="672" textLength="38" lengthAdjust="spacingAndGlyphs">28A</text>
<text x="2304" y="665" textLength="38" lengthAdjust="spacingAndGlyphs">28B</text>
</g>
<g fill="#38383c" stroke="#fff" stroke-width="2.500" stroke-opacity=".5" paint-order="stroke">
<text x="2259" y="567.500" font-size="23" textLength="111.500" lengthAdjust="spacingAndGlyphs">Manhattan</text>
<text x="2282" y="594" font-size="23" textLength="66" lengthAdjust="spacingAndGlyphs">Bridge</text>
</g>
</g>
</g>
<path d="M2137 484L2160 466 2168 440 2150 436Z" fill="#6b6b50" opacity=".5" filter="url(#mb2)"/>
<path d="M2135 484C2128 468 2111 447 2111 430C2111 416 2122 406 2135 406C2148 406 2159 416 2159 430C2159 447 2142 468 2135 484Z" fill="url(#pin)" stroke="#2b6ea3" stroke-width="1.500"/>
<circle cx="2135" cy="430.500" r="8.500" fill="#fff"/>
<text x="2069" y="494" font-size="30" fill="#2d2d31" stroke="#fff" stroke-width="2.500" stroke-opacity=".5" paint-order="stroke" textLength="128.500" lengthAdjust="spacingAndGlyphs">New York</text>
<rect x="2358" y="654" width="90" height="32" fill="#fff" fill-opacity=".72"/>
<text x="2367" y="678" font-size="22.500" fill="#0078a8" textLength="71" lengthAdjust="spacingAndGlyphs">Leaflet</text>
<rect x="1838.500" y="306.500" width="67" height="127" rx="7" fill="#8b9ea4"/>
<rect x="1842" y="310" width="60" height="119.500" rx="5" fill="#fff"/>
<rect x="1842" y="368" width="60" height="1.500" fill="#ccc"/>
<path d="M1871 332V356M1859 344H1883M1859.500 403.500H1882.500" stroke="#000" stroke-width="4.500" fill="none"/>
<rect x="2376" y="306" width="52.500" height="52" rx="7" fill="#fff" style="filter:drop-shadow(0 1px 2px rgba(0,0,0,.25))"/>
<circle cx="2401" cy="331" r="11.500" fill="none" stroke="#000" stroke-width="3"/>
<path d="M2409.500 339.500L2417 346.500" stroke="#000" stroke-width="3.200" stroke-linecap="round"/>
</g>

<!-- panel text -->
<path d="M1821 183L1830 195 1839.500 183" fill="none" stroke="#333" stroke-width="2"/>
<g font-size="28.500" font-weight="700" fill="#2a2a2a">
<text x="1865.500" y="198" textLength="110.500" lengthAdjust="spacingAndGlyphs">CREATE</text>
<text x="1865.500" y="1304.500" textLength="168.500" lengthAdjust="spacingAndGlyphs">CONFIGURE</text>
<text x="1865.500" y="1438.500" textLength="187" lengthAdjust="spacingAndGlyphs">GO PREMIUM</text>
<text x="1865.500" y="1572.500" textLength="98" lengthAdjust="spacingAndGlyphs">THEME</text>
</g>
<path d="M1823.500 1284L1837.500 1294 1823.500 1304M1823.500 1418.500L1837.500 1428.500 1823.500 1438.500M1823.500 1552.500L1837.500 1562.500 1823.500 1572.500" fill="none" stroke="#333" stroke-width="2"/>
<g font-size="29.500" fill="#595959">
<text x="1816.500" y="766" textLength="111" lengthAdjust="spacingAndGlyphs">Latitude</text>
<text x="1816.500" y="878" textLength="134.500" lengthAdjust="spacingAndGlyphs">Longitude</text>
<text x="1816.500" y="990" textLength="62" lengthAdjust="spacingAndGlyphs">Date</text>
<text x="1816.500" y="1102" textLength="65.500" lengthAdjust="spacingAndGlyphs">Time</text>
<text x="2052" y="767.500" textLength="113" lengthAdjust="spacingAndGlyphs">40,7127</text>
<text x="2052" y="879.500" textLength="127" lengthAdjust="spacingAndGlyphs">-74,0060</text>
<text x="2052" y="992" textLength="222.500" lengthAdjust="spacingAndGlyphs">01 January 2022</text>
<text x="2052" y="1103.500" textLength="35" lengthAdjust="spacingAndGlyphs">00</text>
<text x="2274" y="1103.500" textLength="35" lengthAdjust="spacingAndGlyphs">00</text>
<text x="2231" y="1103.500">:</text>
</g>
<path d="M2176 1089.500L2186 1103 2195.500 1089.500M2400 1089.500L2410 1103 2419.500 1089.500" fill="none" stroke="#bfbfbf" stroke-width="2"/>
<g fill="none" stroke="#d0d0d0" stroke-width="2"><rect x="2399" y="973" width="23" height="21"/><path d="M2399 980.500H2422M2405 969.500V975M2416 969.500V975"/></g>
<text x="2344" y="1438.500" font-size="28.500" font-weight="700" fill="#fff" textLength="133.500" lengthAdjust="spacingAndGlyphs">TRY FREE</text>
<polygon points="2478,1450 2494,1450 2478,1461.500" fill="#b96c12"/>
<text x="100" y="1888" font-size="28" fill="#595959" textLength="233" lengthAdjust="spacingAndGlyphs">DIDIENDO ©2021</text>
<text x="2029" y="1906" font-size="32" font-weight="700" fill="#fff" textLength="185.500" lengthAdjust="spacingAndGlyphs">DOWNLOAD</text>
</svg>
</body></html>
